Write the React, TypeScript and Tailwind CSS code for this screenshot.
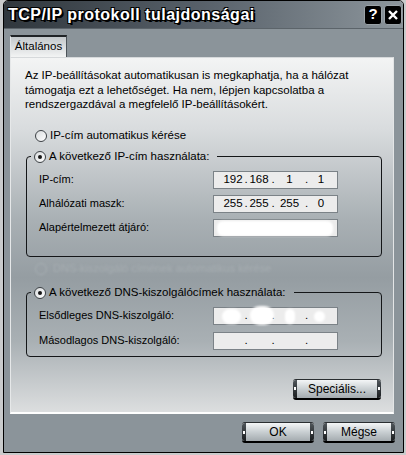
import React from "react";

const font = "font-['Liberation_Sans',Arial,sans-serif]";

// Round option button, optionally checked or greyed out
function Radio({ checked = false, disabled = false }: { checked?: boolean; disabled?: boolean }) {
  return (
    <span
      className={
        "flex h-[12px] w-[12px] shrink-0 items-center justify-center rounded-full border " +
        (disabled
          ? "border-[#a9b0b4] bg-transparent"
          : "border-[#3c4145] bg-gradient-to-br from-[#d9dcde] to-white")
      }
    >
      {checked && <span className="h-[4px] w-[4px] rounded-full bg-[#151515]" />}
    </span>
  );
}

// Four-part address field with dots between the octets
function IpField({ parts, children }: { parts: string[]; children?: React.ReactNode }) {
  const widths = ["w-[22px]", "w-[22px]", "w-[27px]", "w-[22px]"];
  const dots = ["w-[4px]", "w-[6px]", "w-[7px]"];
  return (
    <div className="relative flex h-[18px] w-[125px] items-center border border-[#7b8287] bg-[#ececec] pl-[8px] text-[11.5px] text-black">
      {parts.map((p, i) => (
        <React.Fragment key={i}>
          <span className={widths[i] + " text-center"}>{p}</span>
          {i < 3 && <span className={dots[i] + " text-center"}>.</span>}
        </React.Fragment>
      ))}
      {children}
    </div>
  );
}

function Row({ label, children }: { label: string; children: React.ReactNode }) {
  return (
    <div className="flex items-center">
      <span className="w-[174px] text-[11px] leading-none text-black">{label}</span>
      {children}
    </div>
  );
}

// Silver button with dark end caps
function MetalButton({ label, className = "" }: { label: string; className?: string }) {
  return (
    <div
      className={
        "flex h-[21px] items-stretch rounded-[3px] border-b-2 border-t border-b-black border-t-[#2a2e31] bg-gradient-to-b from-[#f4f6f7] via-[#c9cfd2] to-[#a4abaf] " +
        className
      }
    >
      <span className="flex w-[4px] items-center justify-center rounded-l-[3px] bg-gradient-to-b from-[#50575c] to-[#1b1e20]">
        <span className="h-[3px] w-[2px] bg-white" />
      </span>
      <span className="flex flex-1 items-center justify-center text-[12px] text-black">{label}</span>
      <span className="flex w-[4px] items-center justify-center rounded-r-[3px] bg-gradient-to-b from-[#50575c] to-[#1b1e20]">
        <span className="h-[3px] w-[2px] bg-white" />
      </span>
    </div>
  );
}

function GroupBox({ label, children, className = "" }: { label: string; children: React.ReactNode; className?: string }) {
  return (
    <fieldset className={"ml-[15px] mr-[11px] rounded-[4px] border border-[#141618] " + className}>
      <legend className="-ml-[8px] flex h-[14px] items-center gap-[3px] pl-[3px] pr-[8px]">
        <Radio checked />
        <span className="text-[11.5px] leading-none text-black">{label}</span>
      </legend>
      {children}
    </fieldset>
  );
}

export default function App() {
  return (
    <div className={"h-[455px] w-[406px] overflow-hidden bg-[#c9cbcc] " + font}>
      <div className="ml-[3px] flex h-[453px] w-[401px] flex-col overflow-hidden rounded-t-[5px] border border-black">
        {/* title bar */}
        <div className="flex h-[28px] shrink-0 items-center justify-between border-b border-[#5c646a] bg-gradient-to-r from-[#30373d] via-[#58616a] to-[#8d969c] pl-[4px] pr-[1px]">
          <span className="text-[16px] font-bold tracking-[0.5px] text-white [text-shadow:1px_1px_0_#000,-1px_-1px_0_#000,1px_-1px_0_#000,-1px_1px_0_#000,2px_2px_0_#000]">
            TCP/IP protokoll tulajdonságai
          </span>
          <div className="flex gap-[2px]">
            <span className="flex h-[20px] w-[18px] items-center justify-center rounded-[3px] border border-[#9aa2a7] bg-black text-[15px] font-bold text-white">
              ?
            </span>
            <span className="flex h-[20px] w-[18px] items-center justify-center rounded-[3px] border border-[#9aa2a7] bg-black">
              <svg width="10" height="10" viewBox="0 0 10 10">
                <path d="M1 1L9 9M9 1L1 9" stroke="white" strokeWidth="2.4" />
              </svg>
            </span>
          </div>
        </div>

        {/* dialog body */}
        <div className="flex flex-1 flex-col bg-[#8b949a] pl-[6px] pr-[8px] pt-[6px]">
          <div className="flex">
            <div className="flex h-[22px] w-[57px] items-center justify-center border-l border-r border-t-2 border-l-[#e3e6e7] border-r-[#4d5459] border-t-[#1f2326] bg-gradient-to-b from-[#c3c8cb] to-[#f3f4f4] text-[11.5px] text-black">
              Általános
            </div>
          </div>

          {/* tab page */}
          <div className="flex h-[357px] w-[384px] flex-col border border-b-2 border-l-[#e6e8e9] border-r-[#e3e5e6] border-b-white border-t-[#d6d9db] bg-[linear-gradient(to_bottom,#f3f4f4_0%,#d9dcde_20%,#aab1b5_45%,#959da2_62%,#a9b0b4_80%,#dcdedf_100%)]">
            <p className="pl-[14px] pt-[10px] text-[11.5px] leading-[14.5px] text-black">
              Az IP-beállításokat automatikusan is megkaphatja, ha a hálózat
              <br />
              támogatja ezt a lehetőséget. Ha nem, lépjen kapcsolatba a
              <br />
              rendszergazdával a megfelelő IP-beállításokért.
            </p>

            <div className="ml-[24px] mt-[17px] flex h-[14px] items-center gap-[3px]">
              <Radio />
              <span className="text-[11.5px] leading-none text-black">IP-cím automatikus kérése</span>
            </div>

            <GroupBox label="A következő IP-cím használata:" className="mt-[7px] pb-[19px] pl-[12px] pt-[7px]">
              <div className="flex flex-col gap-[6px]">
                <Row label="IP-cím:">
                  <IpField parts={["192", "168", "1", "1"]} />
                </Row>
                <Row label="Alhálózati maszk:">
                  <IpField parts={["255", "255", "255", "0"]} />
                </Row>
                <Row label="Alapértelmezett átjáró:">
                  <IpField parts={["", "", "", ""]}>
                    <span className="absolute left-[3px] top-[1px] h-[15px] w-[116px] rounded-[6px] bg-white blur-[1px]" />
                  </IpField>
                </Row>
              </div>
            </GroupBox>

            <div className="ml-[24px] mt-[5px] flex h-[14px] items-center gap-[6px] blur-[0.8px]">
              <Radio disabled />
              <span className="text-[11px] leading-none text-[#a6adb1]">DNS-kiszolgáló címének automatikus kérése</span>
            </div>

            <GroupBox label="A következő DNS-kiszolgálócímek használata:" className="mt-[10px] pb-[6px] pl-[12px] pt-[7px]">
              <div className="flex flex-col gap-[7px]">
                <Row label="Elsődleges DNS-kiszolgáló:">
                  <IpField parts={["", "", "", ""]}>
                    <span className="absolute left-[8px] top-[1px] h-[15px] w-[19px] rounded-full bg-white blur-[1px]" />
                    <span className="absolute left-[36px] top-[-2px] h-[19px] w-[24px] rounded-full bg-white blur-[1px]" />
                    <span className="absolute left-[71px] top-[1px] h-[15px] w-[10px] rounded-full bg-white blur-[1px]" />
                    <span className="absolute left-[100px] top-[3px] h-[11px] w-[11px] rounded-full bg-white blur-[1px]" />
                  </IpField>
                </Row>
                <Row label="Másodlagos DNS-kiszolgáló:">
                  <IpField parts={["", "", "", ""]} />
                </Row>
              </div>
            </GroupBox>

            <div className="mr-[12px] mt-[22px] flex justify-end">
              <MetalButton label="Speciális..." className="w-[88px]" />
            </div>
          </div>

          <div className="mt-[8px] flex justify-end gap-[9px]">
            <MetalButton label="OK" className="w-[72px]" />
            <MetalButton label="Mégse" className="w-[72px]" />
          </div>
        </div>
      </div>
    </div>
  );
}
